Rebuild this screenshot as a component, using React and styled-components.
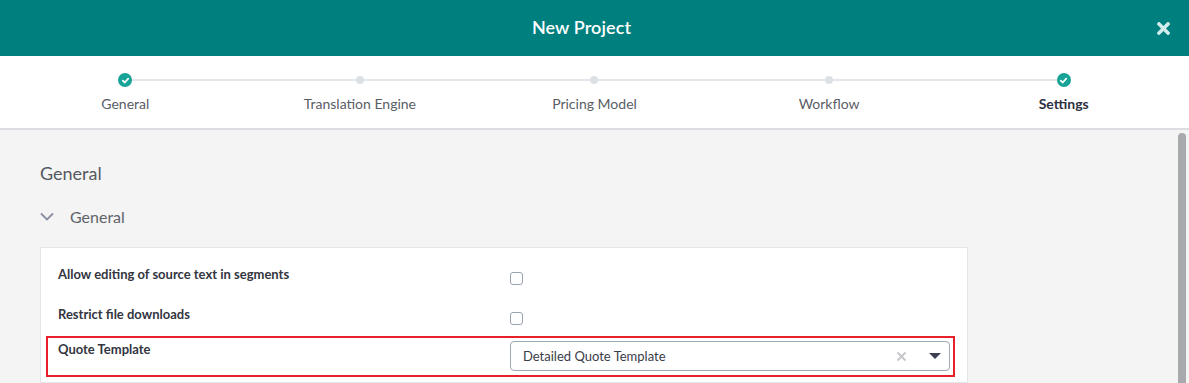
import React from "react";
import styled, { createGlobalStyle } from "styled-components";
import { FaTimes } from "react-icons/fa";

const GlobalStyle = createGlobalStyle`
  html, body, #root {
    margin: 0;
    height: 100%;
  }
  body {
    font-family: "Lato", "Liberation Sans", sans-serif;
    color: #333;
    overflow: hidden;
    background: #f4f4f4;
  }
`;

const steps = [
  { label: "General", done: true },
  { label: "Translation Engine" },
  { label: "Pricing Model" },
  { label: "Workflow" },
  { label: "Settings", done: true, active: true },
];

// Top bar
const TitleBar = styled.header`
  height: 56px;
  background: #007f7f;
  display: flex;
  align-items: center;
  justify-content: center;
  padding-right: 26px;
  position: relative;
`;

const Title = styled.h1`
  margin: 0 0 2px 0;
  color: #fff;
  font-size: 18px;
  font-weight: 600;
  letter-spacing: 0.1px;
`;

const CloseButton = styled.button`
  position: absolute;
  right: 16px;
  top: 19px;
  border: 0;
  padding: 0;
  background: none;
  color: #d3ecec;
  display: flex;
  cursor: pointer;
`;

// Stepper
const Stepper = styled.nav`
  height: 72px;
  background: #fff;
  border-bottom: 2px solid #dcdde2;
  display: grid;
  grid-template-columns: repeat(5, 1fr);
  padding: 0 8px;
  position: relative;
`;

const Track = styled.div`
  position: absolute;
  left: calc(8px + (100% - 16px) / 10);
  right: calc(8px + (100% - 16px) / 10);
  top: 23px;
  height: 2px;
  background: #e3e6ea;
`;

const Step = styled.div`
  display: flex;
  flex-direction: column;
  align-items: center;
  position: relative;
  z-index: 1;
`;

const Marker = styled.div`
  height: 24px;
  margin-top: 12px;
  display: flex;
  align-items: center;
  justify-content: center;
`;

const Dot = styled.span`
  width: 8px;
  height: 8px;
  border-radius: 50%;
  background: #dde1e6;
`;

const CheckCircle = styled.span`
  width: 14px;
  height: 14px;
  border-radius: 50%;
  background: #17a398;
  display: flex;
  align-items: center;
  justify-content: center;
`;

const StepLabel = styled.span`
  margin-top: 3px;
  font-size: 14px;
  color: ${({ $active }) => ($active ? "#2e3040" : "#5a5d66")};
  font-weight: ${({ $active }) => ($active ? 700 : 400)};
`;

// Content
const Content = styled.main`
  position: relative;
  padding: 32px 40px 0 40px;
  background: #f4f4f4;
`;

const ScrollThumb = styled.div`
  position: absolute;
  right: 3px;
  top: 3px;
  width: 8px;
  height: 300px;
  border-radius: 4px;
  background: #a7a9ac;
`;

const PageHeading = styled.h2`
  margin: 0;
  font-size: 18px;
  font-weight: 400;
  color: #555860;
  line-height: 22px;
`;

const SectionToggle = styled.div`
  margin-top: 20px;
  display: flex;
  align-items: center;
  gap: 16px;
  color: #8a8fa3;
  height: 24px;
`;

const SectionTitle = styled.span`
  font-size: 16px;
  color: #60636b;
`;

const Card = styled.section`
  margin-top: 19px;
  width: 928px;
  box-sizing: border-box;
  background: #fff;
  border: 1px solid #e3e6ea;
  padding: 17px 0 5px 17px;
`;

const Row = styled.div`
  display: grid;
  grid-template-columns: 452px 440px;
  height: ${({ $h }) => $h}px;
`;

const Label = styled.span`
  font-size: 13px;
  font-weight: 700;
  color: #33353f;
  line-height: 18px;
`;

const Checkbox = styled.span`
  margin-top: 7px;
  width: 11px;
  height: 11px;
  border: 1px solid #98a2b0;
  border-radius: 3px;
  background: #fff;
`;

const Highlight = styled.div`
  margin-left: -12px;
  width: 892px;
  border: 2px solid #e8202a;
  padding: 2px 3px 4px 10px;
  display: grid;
  grid-template-columns: 452px 440px;
`;

const Select = styled.div`
  margin-top: 1px;
  box-sizing: border-box;
  height: 30px;
  border: 1px solid #a0a8b4;
  border-radius: 4px;
  display: flex;
  align-items: center;
  padding: 0 8px 0 12px;
  font-size: 13px;
  color: #3a3c48;
`;

const SelectValue = styled.span`
  flex: 1;
`;

const ClearIcon = styled.span`
  display: flex;
  color: #c6c7cb;
  margin-right: 22px;
`;

const Caret = styled.span`
  width: 0;
  height: 0;
  border-left: 6px solid transparent;
  border-right: 6px solid transparent;
  border-top: 6px solid #3c4052;
`;

const Check = () => (
  <svg width="9" height="9" viewBox="0 0 10 10">
    <path d="M2 5.2 L4.2 7.2 L8 3" fill="none" stroke="#fff" strokeWidth="2" strokeLinecap="round" strokeLinejoin="round" />
  </svg>
);

const Cross = () => (
  <svg width="11" height="11" viewBox="0 0 11 11">
    <path d="M1.5 1.5 L9.5 9.5 M9.5 1.5 L1.5 9.5" stroke="currentColor" strokeWidth="2" />
  </svg>
);

const Chevron = () => (
  <svg width="14" height="9" viewBox="0 0 14 9">
    <path d="M1 1.5 L7 7.5 L13 1.5" fill="none" stroke="currentColor" strokeWidth="1.8" />
  </svg>
);

export default function App() {
  return (
    <>
      <GlobalStyle />
      <TitleBar>
        <Title>New Project</Title>
        <CloseButton aria-label="Close">
          <FaTimes size={19} />
        </CloseButton>
      </TitleBar>
      <Stepper>
        <Track />
        {steps.map((s) => (
          <Step key={s.label}>
            <Marker>
              {s.done ? (
                <CheckCircle>
                  <Check />
                </CheckCircle>
              ) : (
                <Dot />
              )}
            </Marker>
            <StepLabel $active={s.active}>{s.label}</StepLabel>
          </Step>
        ))}
      </Stepper>
      <Content>
        <ScrollThumb />
        <PageHeading>General</PageHeading>
        <SectionToggle>
          <Chevron />
          <SectionTitle>General</SectionTitle>
        </SectionToggle>
        <Card>
          <Row $h={40}>
            <Label>Allow editing of source text in segments</Label>
            <Checkbox />
          </Row>
          <Row $h={31}>
            <Label>Restrict file downloads</Label>
            <Checkbox />
          </Row>
          <Highlight>
            <Label>Quote Template</Label>
            <Select>
              <SelectValue>Detailed Quote Template</SelectValue>
              <ClearIcon>
                <Cross />
              </ClearIcon>
              <Caret />
            </Select>
          </Highlight>
        </Card>
      </Content>
    </>
  );
}
